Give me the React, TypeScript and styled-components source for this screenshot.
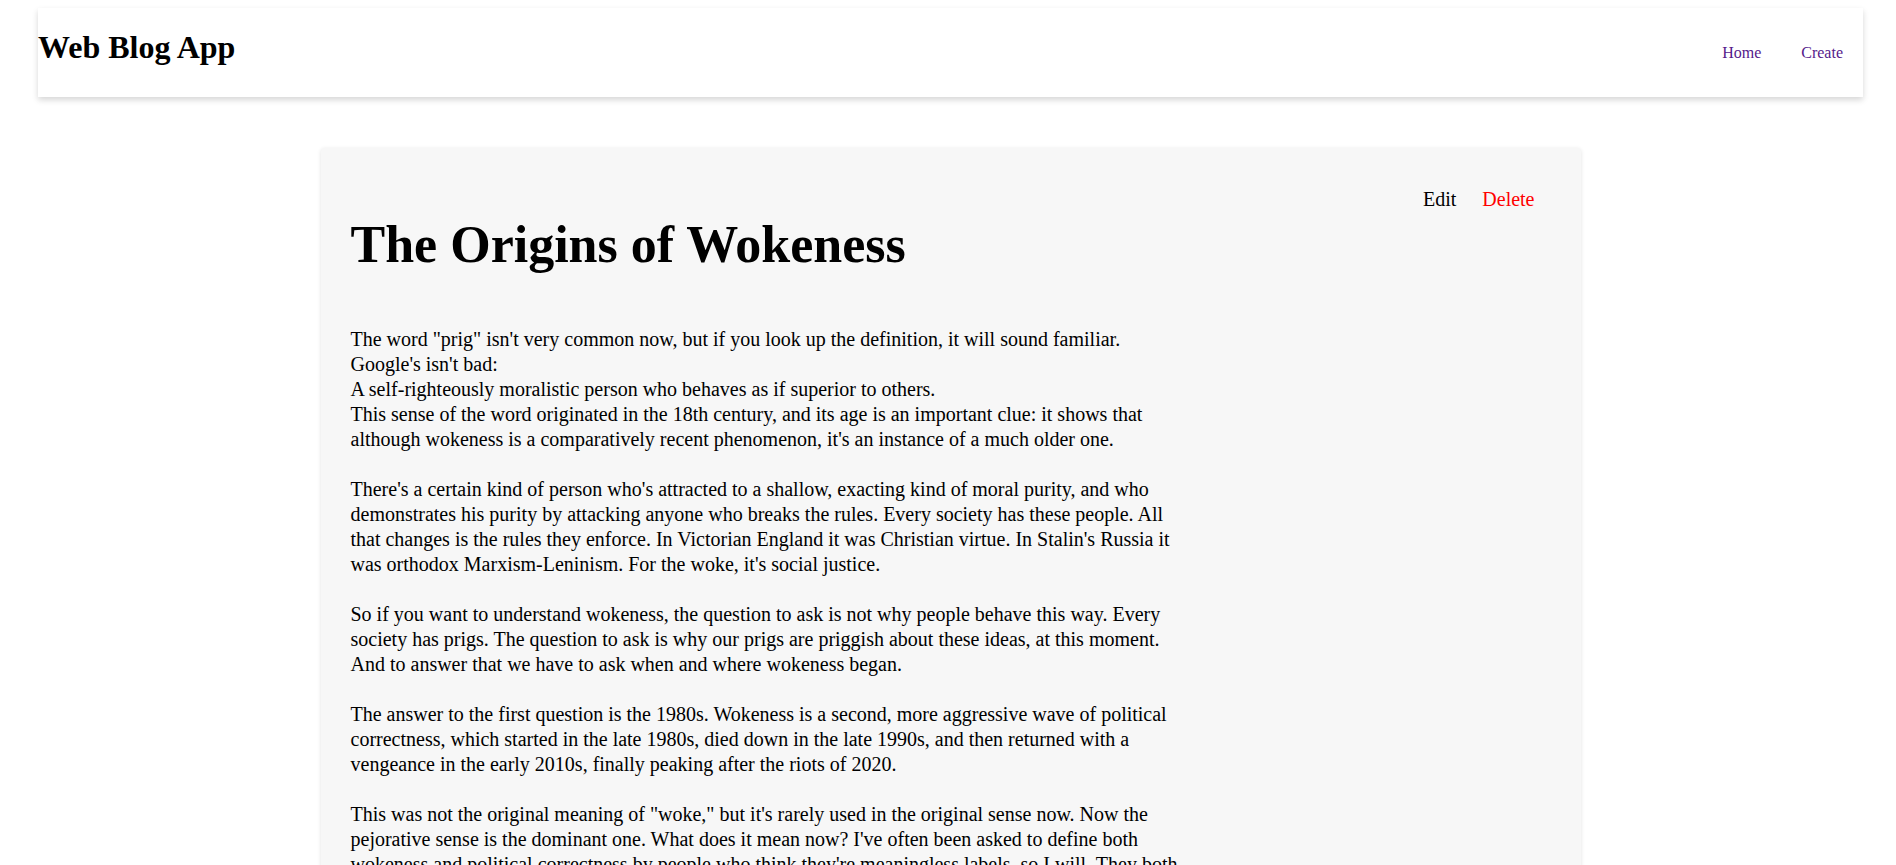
import React from "react";
import styled, { createGlobalStyle } from "styled-components";

const GlobalStyle = createGlobalStyle`
  html, body {
    margin: 0;
    padding: 0;
    background: #ffffff;
  }
  body {
    font-family: "Liberation Serif", "Times New Roman", serif;
    color: #000;
  }
  * { box-sizing: border-box; }
`;

const Page = styled.div`
  padding: 8px 33px 40px 38px;
`;

const Header = styled.header`
  display: flex;
  align-items: baseline;
  justify-content: space-between;
  background: #ffffff;
  box-shadow: 0 3px 6px rgba(0, 0, 0, 0.16);
  padding: 0 0 9px 0;
`;

const Brand = styled.h1`
  margin: 21.44px 0;
  font-size: 32px;
  font-weight: bold;
  line-height: normal;
`;

const Nav = styled.nav`
  display: flex;
  gap: 40px;
  padding-right: 20px;
`;

const NavLink = styled.a`
  color: #551a8b;
  text-decoration: none;
  font-size: 16px;
  cursor: pointer;
`;

const Card = styled.article`
  width: 1260px;
  margin: 51px auto 0;
  padding: 40px 30px 30px;
  background: #f7f7f7;
  border-radius: 4px;
  box-shadow: 0 1px 4px rgba(0, 0, 0, 0.12);
`;

const Actions = styled.div`
  display: flex;
  justify-content: flex-end;
  gap: 26px;
  padding-right: 16px;
  font-size: 20px;
  line-height: 23px;
`;

const ActionLink = styled.a<{ $danger?: boolean }>`
  color: ${(p) => (p.$danger ? "#ff0000" : "#000000")};
  text-decoration: none;
  cursor: pointer;
`;

const Title = styled.h1`
  margin: 4px 0 53px;
  font-size: 52px;
  font-weight: bold;
  line-height: normal;
`;

const Body = styled.div`
  width: 840px;
  font-size: 20px;
  line-height: 25px;
  white-space: pre-wrap;
`;

const text = `The word "prig" isn't very common now, but if you look up the definition, it will sound familiar. Google's isn't bad:
A self-righteously moralistic person who behaves as if superior to others.
This sense of the word originated in the 18th century, and its age is an important clue: it shows that although wokeness is a comparatively recent phenomenon, it's an instance of a much older one.

There's a certain kind of person who's attracted to a shallow, exacting kind of moral purity, and who demonstrates his purity by attacking anyone who breaks the rules. Every society has these people. All that changes is the rules they enforce. In Victorian England it was Christian virtue. In Stalin's Russia it was orthodox Marxism-Leninism. For the woke, it's social justice.

So if you want to understand wokeness, the question to ask is not why people behave this way. Every society has prigs. The question to ask is why our prigs are priggish about these ideas, at this moment. And to answer that we have to ask when and where wokeness began.

The answer to the first question is the 1980s. Wokeness is a second, more aggressive wave of political correctness, which started in the late 1980s, died down in the late 1990s, and then returned with a vengeance in the early 2010s, finally peaking after the riots of 2020.

This was not the original meaning of "woke," but it's rarely used in the original sense now. Now the pejorative sense is the dominant one. What does it mean now? I've often been asked to define both wokeness and political correctness by people who think they're meaningless labels, so I will. They both have the same definition:
An aggressively performative focus on social justice.
In other words, it's people being prigs about social justice. And that's the real problem — the performativeness, not the social justice.`;

export default function App() {
  return (
    <>
      <GlobalStyle />
      <Page>
        <Header>
          <Brand>Web Blog App</Brand>
          <Nav>
            <NavLink href="#">Home</NavLink>
            <NavLink href="#">Create</NavLink>
          </Nav>
        </Header>
        <Card>
          <Actions>
            <ActionLink>Edit</ActionLink>
            <ActionLink $danger>Delete</ActionLink>
          </Actions>
          <Title>The Origins of Wokeness</Title>
          <Body>{text}</Body>
        </Card>
      </Page>
    </>
  );
}
